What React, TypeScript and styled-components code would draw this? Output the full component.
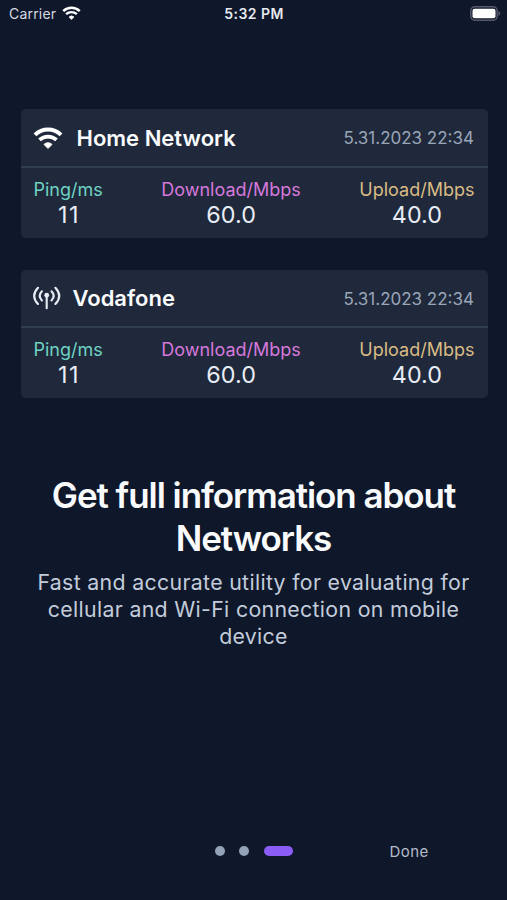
import React from "react";
import styled, { createGlobalStyle } from "styled-components";

const GlobalStyle = createGlobalStyle`
  * { box-sizing: border-box; }
  body {
    margin: 0;
    background: #0f172a;
    font-family: Inter, "Liberation Sans", sans-serif;
  }
  h1, h2, p { margin: 0; }
`;

const Screen = styled.main`
  width: 100%;
  height: 900px;
  display: flex;
  flex-direction: column;
  background: #0f172a;
  color: #f8fafc;
  overflow: hidden;
`;

const StatusBar = styled.header`
  height: 28px;
  display: grid;
  grid-template-columns: 1fr auto 1fr;
  align-items: center;
  padding: 0 6.5px 0 9px;
  font-size: 14px;
  line-height: 20px;
`;

const Carrier = styled.div`
  display: flex;
  align-items: center;
  gap: 5.5px;
  color: #d5dae3;
  letter-spacing: 0.2px;
  svg { margin-top: -2px; }
`;

const Clock = styled.div`
  margin-right: 1.5px;
  font-weight: 600;
  letter-spacing: 0.45px;
  color: #e6e9ef;
`;

const Battery = styled.div`
  display: flex;
  justify-content: flex-end;
  margin-top: -1px;
`;

const CardList = styled.section`
  display: flex;
  flex-direction: column;
  gap: 32px;
  padding: 81.4px 19.5px 0 20.5px;
`;

const Card = styled.article`
  height: 128.4px;
  border-radius: 5px;
  background: #1f293b;
`;

const CardHeader = styled.div`
  height: 58.5px;
  display: flex;
  align-items: center;
  padding: 0 13.5px 0 12.5px;
  border-bottom: 2px solid #313d50;
`;

const CardIcon = styled.span<{ $gap: number }>`
  display: flex;
  margin-right: ${(p) => p.$gap}px;
`;

const CardTitle = styled.h2`
  flex: 1;
  font-size: 22px;
  font-weight: 600;
  line-height: 28px;
`;

const Timestamp = styled.time`
  font-size: 17px;
  line-height: 24px;
  padding-top: 1px;
  color: #9aa6b8;
`;

const Metrics = styled.div`
  display: flex;
  justify-content: space-between;
  padding: 8.8px 13px 0 13px;
`;

const Metric = styled.div`
  display: flex;
  flex-direction: column;
  align-items: center;
`;

const MetricLabel = styled.span<{ $color: string }>`
  font-size: 18px;
  line-height: 25px;
  color: ${(p) => p.$color};
`;

const MetricValue = styled.span<{ $spacing: number }>`
  font-size: 23.3px;
  line-height: 26px;
  letter-spacing: ${(p) => p.$spacing}px;
  margin-right: ${(p) => -p.$spacing}px;
  color: #e8edf5;
`;

const Intro = styled.section`
  padding: 76px 30px 0;
  text-align: center;
`;

const Headline = styled.h1`
  font-size: 35px;
  font-weight: 600;
  line-height: 43px;
  letter-spacing: -1.05px;
`;

const Description = styled.p`
  margin-top: 9px;
  font-size: 21.3px;
  line-height: 27px;
  letter-spacing: 0.33px;
  color: #c2ccdb;
`;

const Footer = styled.footer`
  margin-top: auto;
  height: 97px;
  display: grid;
  grid-template-columns: 1fr auto 1fr;
  align-items: start;
`;

const Pager = styled.div`
  grid-column: 2;
  display: flex;
  gap: 14.5px;
  margin-left: 1px;
  padding-top: 43.3px;
`;

const Dot = styled.span<{ $active?: boolean }>`
  width: ${(p) => (p.$active ? 29.5 : 10)}px;
  height: 10px;
  border-radius: 5px;
  background: ${(p) => (p.$active ? "#8b5cf6" : "#94a3b8")};
`;

const DoneButton = styled.button`
  justify-self: center;
  margin: 37px 0 0 18px;
  padding: 0;
  border: 0;
  background: none;
  font: 400 15px/24px Inter, sans-serif;
  letter-spacing: 0.5px;
  color: #b4bdcb;
`;

const WifiIcon = ({ width, height }: { width: number; height: number }) => (
  <svg width={width} height={height} viewBox="0 0 30 22" fill="none" strokeLinejoin="round">
    <path d="M2 7.9A18.6 18.6 0 0 1 28 7.9" stroke="#fff" strokeWidth="4" />
    <path d="M6.5 12.9A12.4 12.4 0 0 1 23.5 12.9" stroke="#fff" strokeWidth="3.7" />
    <path d="M15 21.4 11 17.4a5.8 5.8 0 0 1 8 0Z" fill="#fff" stroke="#fff" strokeWidth="1" />
  </svg>
);

const CellularIcon = () => (
  <svg width="28" height="24" viewBox="0 0 28 24" fill="none" stroke="#e8edf5" strokeWidth="2.1" strokeLinecap="round">
    <path d="M5 1.8C.1 7 .1 12.8 5 18M22.4 1.8c4.9 5.2 4.9 11 0 16.2" />
    <path d="M8.9 5.3c-3 3.1-3 6 0 9.2M18.5 5.3c3 3.1 3 6 0 9.2" />
    <path d="M13.7 10v12.3" />
    <circle cx="13.7" cy="9.2" r="2.4" fill="#e8edf5" stroke="none" />
  </svg>
);

const BatteryIcon = () => (
  <svg width="31" height="15" viewBox="0 0 31 15">
    <rect x=".8" y=".8" width="26.4" height="13.4" rx="4" fill="none" stroke="#55596a" strokeWidth="1.5" />
    <rect x="2.5" y="2.7" width="23" height="9.6" rx="2" fill="#fff" />
    <path d="M28.5 5v5q1.8-.8 1.8-2.5T28.5 5Z" fill="#55596a" />
  </svg>
);

const metrics = [
  { label: "Ping/ms", value: "11", color: "#6fd3c3", spacing: 1.5 },
  { label: "Download/Mbps", value: "60.0", color: "#d678dc", spacing: 0.1 },
  { label: "Upload/Mbps", value: "40.0", color: "#d9bb84", spacing: 0.1 },
];

const networks = [
  { name: "Home Network", icon: <WifiIcon width={30} height={22} />, gap: 13.5 },
  { name: "Vodafone", icon: <CellularIcon />, gap: 11.5 },
];

export default function App() {
  return (
    <>
      <GlobalStyle />
      <Screen>
        <StatusBar>
          <Carrier>
            Carrier
            <WifiIcon width={19} height={14} />
          </Carrier>
          <Clock>5:32 PM</Clock>
          <Battery>
            <BatteryIcon />
          </Battery>
        </StatusBar>
        <CardList>
          {networks.map((network) => (
            <Card key={network.name}>
              <CardHeader>
                <CardIcon $gap={network.gap}>{network.icon}</CardIcon>
                <CardTitle>{network.name}</CardTitle>
                <Timestamp>5.31.2023 22:34</Timestamp>
              </CardHeader>
              <Metrics>
                {metrics.map((metric) => (
                  <Metric key={metric.label}>
                    <MetricLabel $color={metric.color}>{metric.label}</MetricLabel>
                    <MetricValue $spacing={metric.spacing}>{metric.value}</MetricValue>
                  </Metric>
                ))}
              </Metrics>
            </Card>
          ))}
        </CardList>
        <Intro>
          <Headline>
            Get full information about
            <br />
            Networks
          </Headline>
          <Description>
            Fast and accurate utility for evaluating for
            <br />
            cellular and Wi-Fi connection on mobile
            <br />
            device
          </Description>
        </Intro>
        <Footer>
          <Pager>
            <Dot />
            <Dot />
            <Dot $active />
          </Pager>
          <DoneButton>Done</DoneButton>
        </Footer>
      </Screen>
    </>
  );
}
